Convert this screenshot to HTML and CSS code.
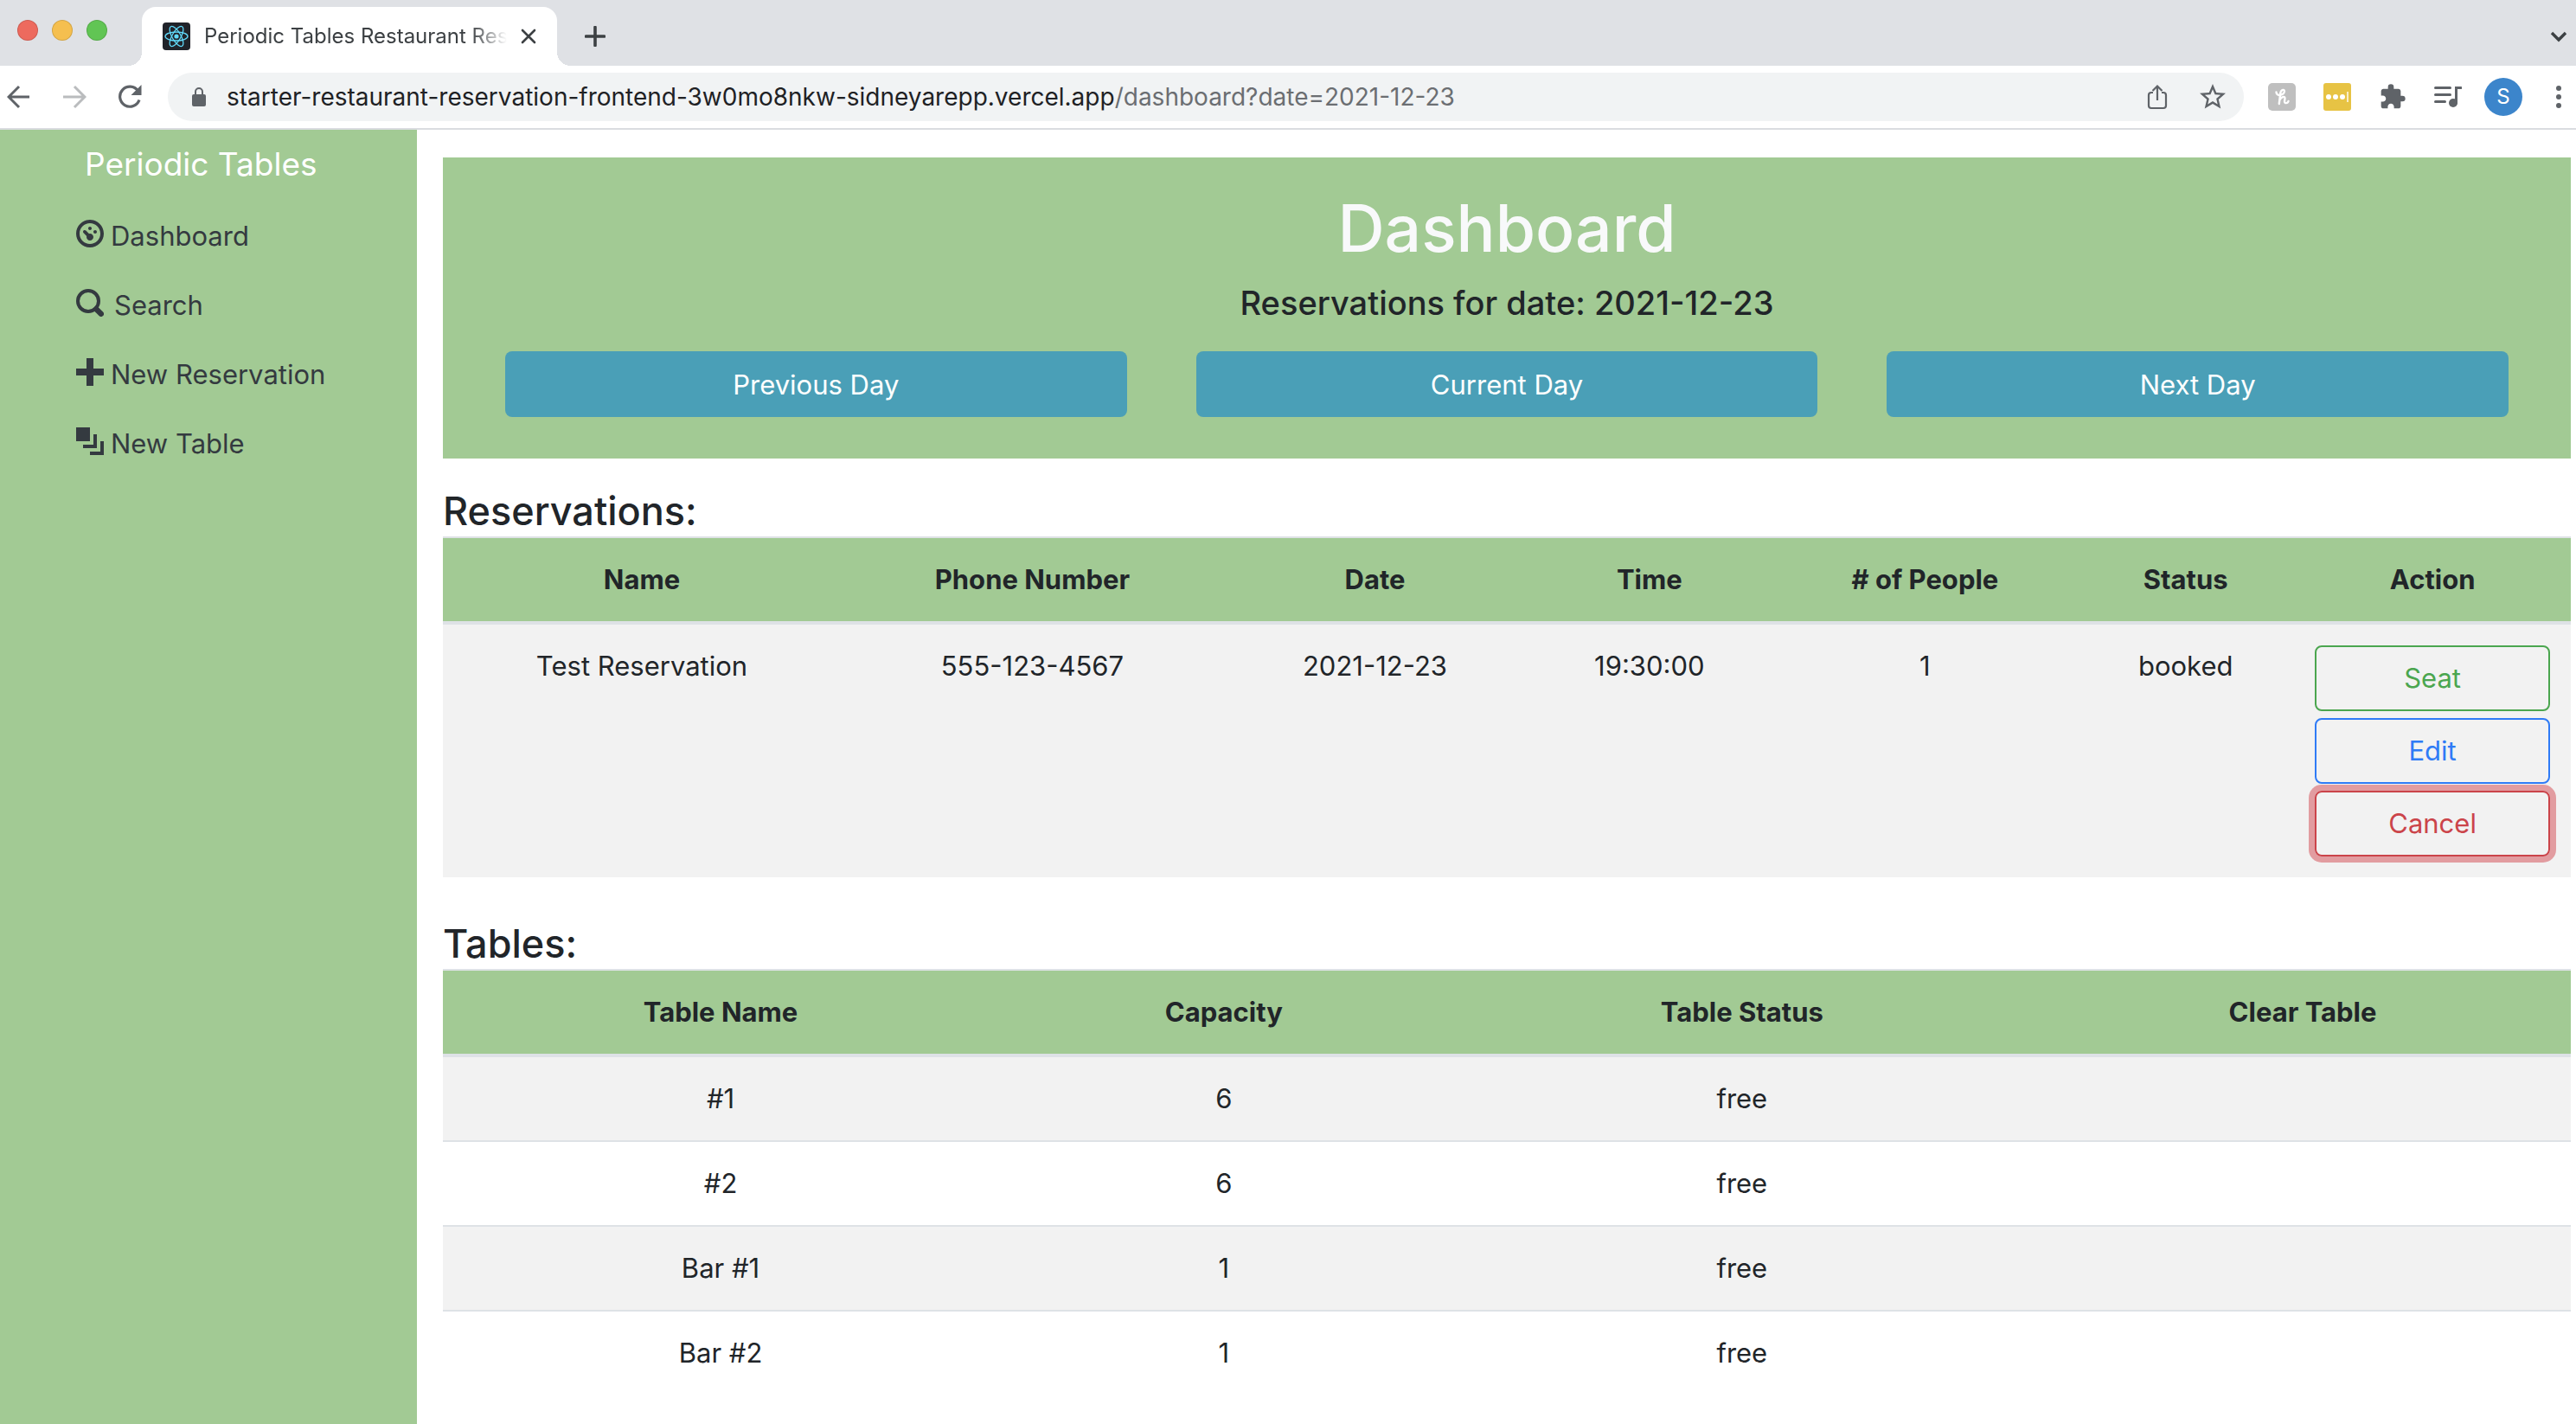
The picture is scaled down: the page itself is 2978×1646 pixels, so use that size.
FILE: index.html
```html
<!DOCTYPE html>
<html lang="en">
<head>
<meta charset="utf-8">
<title>Periodic Tables Restaurant Reservation</title>
<link rel="stylesheet" href="styles.css">
</head>
<body>
<header class="browser">
  <div class="tab-strip">
    <div class="lights"><span class="light red"></span><span class="light yellow"></span><span class="light green"></span></div>
    <div class="tab">
      <svg class="favicon" viewBox="0 0 32 32" aria-hidden="true"><rect width="32" height="32" rx="4" fill="#20232a"/><g fill="none" stroke="#61dafb" stroke-width="1.3"><ellipse cx="16" cy="16" rx="13" ry="5"/><ellipse cx="16" cy="16" rx="13" ry="5" transform="rotate(60 16 16)"/><ellipse cx="16" cy="16" rx="13" ry="5" transform="rotate(120 16 16)"/></g><circle cx="16" cy="16" r="2.6" fill="#61dafb"/></svg>
      <span class="tab-title">Periodic Tables Restaurant Reservation</span>
      <button class="icon-button" aria-label="Close tab"><svg width="18" height="18" viewBox="0 0 18 18"><path d="M2 2l14 14M16 2L2 16" stroke="#3c4043" stroke-width="2.6" stroke-linecap="round"/></svg></button>
    </div>
    <button class="icon-button new-tab" aria-label="New tab"><svg width="24" height="24" viewBox="0 0 24 24"><path d="M12 1.500v21M1.500 12h21" stroke="#3c4043" stroke-width="3.600" stroke-linecap="round"/></svg></button>
    <button class="icon-button tab-search" aria-label="Search tabs"><svg width="20" height="14" viewBox="0 0 20 14"><path d="M2 3l8 8 8-8" fill="none" stroke="#3c4043" stroke-width="3.400"/></svg></button>
  </div>
  <div class="toolbar">
    <div class="nav-buttons">
      <button class="icon-button" aria-label="Back"><svg width="28" height="28" viewBox="0 0 28 28"><path d="M26 14H3M14 2L2 14l12 12" fill="none" stroke="#5f6368" stroke-width="3"/></svg></button>
      <button class="icon-button" aria-label="Forward"><svg width="28" height="28" viewBox="0 0 28 28"><path d="M1 14h24M14 2l12 12-12 12" fill="none" stroke="#babcbe" stroke-width="3"/></svg></button>
      <button class="icon-button" aria-label="Reload"><svg width="28" height="28" viewBox="0 0 28 28"><path d="M23.500 7A11.500 11.500 0 1 0 25 17.500" fill="none" stroke="#5f6368" stroke-width="3.200"/><path d="M27.500 0v12h-12z" fill="#5f6368"/></svg></button>
    </div>
    <div class="address">
      <svg width="18" height="24" viewBox="0 0 18 24" aria-hidden="true"><rect x="1" y="9" width="16" height="14" rx="2" fill="#5f6368"/><path d="M5 10V6a4 4 0 0 1 8 0v4" fill="none" stroke="#5f6368" stroke-width="2"/></svg>
      <span class="url">starter-restaurant-reservation-frontend-3w0mo8nkw-sidneyarepp.vercel.app<span class="path">/dashboard?date=2021-12-23</span></span>
      <button class="icon-button" aria-label="Share"><svg width="24" height="30" viewBox="0 0 24 30"><path d="M7 10H5a3 3 0 0 0-3 3v12a3 3 0 0 0 3 3h14a3 3 0 0 0 3-3V13a3 3 0 0 0-3-3h-2M12 19V3M6.500 8L12 2.500 17.500 8" fill="none" stroke="#5f6368" stroke-width="2.200"/></svg></button>
      <button class="icon-button star" aria-label="Bookmark"><svg width="36" height="36" viewBox="0 0 24 24"><path fill="#5f6368" d="M22 9.240l-7.190-.62L12 2 9.190 8.630 2 9.240l5.460 4.730L5.820 21 12 17.270 18.180 21l-1.630-7.030L22 9.240zM12 15.400l-3.760 2.270 1-4.280-3.320-2.880 4.380-.38L12 6.100l1.710 4.040 4.380.38-3.320 2.880 1 4.280L12 15.400z"/></svg></button>
    </div>
    <div class="account">
      <div class="extensions">
        <svg width="32" height="32" viewBox="0 0 32 32" aria-hidden="true"><rect width="32" height="32" rx="5" fill="#bfbfbf"/><path d="M9.500 10.500c0 3 3 3.800 5 3.300 3-.6 5.200-3 4.300-5s-4-.8-4.500 2.700L12.800 24M13.500 19.500c1.500-3.500 6-5 6-2 0 2-1.500 5 .5 5.500 1.500.3 3-.4 3.500-2" fill="none" stroke="#fff" stroke-width="2.400" stroke-linecap="round"/></svg>
        <svg width="32" height="32" viewBox="0 0 32 32" aria-hidden="true"><rect width="32" height="32" rx="3" fill="#e7c344"/><g fill="#fff"><circle cx="6" cy="16" r="3"/><circle cx="14" cy="16" r="3"/><circle cx="22" cy="16" r="3"/></g><path d="M28 10v12" stroke="#f8edc8" stroke-width="2"/></svg>
        <svg width="32" height="32" viewBox="0 0 24 24" aria-hidden="true"><path fill="#5f6368" d="M20.500 11H19V7c0-1.100-.9-2-2-2h-4V3.500a2.500 2.500 0 0 0-5 0V5H4c-1.100 0-1.990.9-1.990 2v3.800H3.500c1.490 0 2.700 1.210 2.700 2.700s-1.210 2.700-2.700 2.700H2V20c0 1.100.9 2 2 2h3.800v-1.500c0-1.490 1.210-2.700 2.700-2.700s2.700 1.210 2.700 2.700V22H17c1.100 0 2-.9 2-2v-4h1.500a2.500 2.500 0 0 0 0-5z"/></svg>
        <svg width="32" height="26" viewBox="0 0 32 26" aria-hidden="true"><path d="M1.500 2.500h17M1.500 10.500h17M1.500 18.500h11" stroke="#5f6368" stroke-width="3" stroke-linecap="round"/><circle cx="22" cy="20" r="5" fill="#5f6368"/><path d="M25.500 20V2.500H31" fill="none" stroke="#5f6368" stroke-width="3" stroke-linecap="round"/></svg>
      </div>
      <span class="avatar">S</span>
      <button class="icon-button" aria-label="Menu"><svg width="32" height="28" viewBox="0 0 32 28"><g fill="#5f6368"><circle cx="16" cy="4" r="3"/><circle cx="16" cy="14" r="3"/><circle cx="16" cy="24" r="3"/></g></svg></button>
    </div>
  </div>
</header>
<div class="app">
  <nav class="sidebar">
    <a class="brand" href="#">Periodic Tables</a>
    <ul class="menu">
      <li><a href="#"><svg viewBox="0 0 8 8" aria-hidden="true"><path d="M4 0c-2.200 0-4 1.800-4 4s1.800 4 4 4 4-1.800 4-4-1.800-4-4-4zm0 1c1.660 0 3 1.340 3 3s-1.340 3-3 3-3-1.340-3-3 1.340-3 3-3zm0 1c-.28 0-.5.22-.5.500s.22.500.500.500.500-.22.500-.500-.22-.500-.500-.500zm-1.660 1a.500.500 0 0 0-.190.840l.910.910c-.02.080-.060.160-.060.250 0 .550.450 1 1 1s1-.450 1-1-.450-1-1-1c-.090 0-.170.040-.250.060l-.910-.910a.500.500 0 0 0-.440-.160.500.500 0 0 0-.060 0zm3.160 0c-.28 0-.5.220-.5.500s.22.500.500.500.500-.22.500-.500-.22-.500-.500-.500z"/></svg><span>Dashboard</span></a></li>
      <li><a class="search" href="#"><svg viewBox="0 0 8 8" aria-hidden="true"><circle cx="3.500" cy="3.500" r="3" fill="none" stroke="currentColor"/><path d="M5.800 5.800L7.200 7.200" stroke="currentColor" stroke-width="1.600" stroke-linecap="round"/></svg><span>Search</span></a></li>
      <li><a href="#"><svg viewBox="0 0 8 8" aria-hidden="true"><path d="M3 0v3h-3v2h3v3h2v-3h3v-2h-3v-3h-2z"/></svg><span>New Reservation</span></a></li>
      <li><a href="#"><svg viewBox="0 0 8 8" aria-hidden="true"><path d="M0 0v4h4v-4h-4zm5 2v3h-3v1h4v-4h-1zm2 2v3h-3v1h4v-4h-1z"/></svg><span>New Table</span></a></li>
    </ul>
  </nav>
  <main class="content">
    <section class="hero">
      <h1>Dashboard</h1>
      <h4>Reservations for date: 2021-12-23</h4>
      <div class="days">
        <button class="day">Previous Day</button>
        <button class="day">Current Day</button>
        <button class="day">Next Day</button>
      </div>
    </section>
    <h3>Reservations:</h3>
    <table class="table reservations">
      <colgroup><col class="c1"><col class="c2"><col class="c3"><col class="c4"><col class="c5"><col class="c6"><col class="c7"></colgroup>
      <thead><tr><th>Name</th><th>Phone Number</th><th>Date</th><th>Time</th><th># of People</th><th>Status</th><th>Action</th></tr></thead>
      <tbody><tr><td>Test Reservation</td><td>555-123-4567</td><td>2021-12-23</td><td>19:30:00</td><td>1</td><td>booked</td>
        <td><div class="actions"><button class="action seat">Seat</button><button class="action edit">Edit</button><button class="action cancel">Cancel</button></div></td></tr></tbody>
    </table>
    <h3>Tables:</h3>
    <table class="table seating">
      <colgroup><col class="t1"><col class="t2"><col class="t3"><col class="t4"></colgroup>
      <thead><tr><th>Table Name</th><th>Capacity</th><th>Table Status</th><th>Clear Table</th></tr></thead>
      <tbody>
        <tr><td>#1</td><td>6</td><td>free</td><td></td></tr>
        <tr><td>#2</td><td>6</td><td>free</td><td></td></tr>
        <tr><td>Bar #1</td><td>1</td><td>free</td><td></td></tr>
        <tr><td>Bar #2</td><td>1</td><td>free</td><td></td></tr>
      </tbody>
    </table>
  </main>
</div>
</body>
</html>
```
FILE: styles.css
```css
* { box-sizing: border-box; }
body {
  margin: 0;
  min-height: 100vh;
  display: flex;
  flex-direction: column;
  font-family: Inter, "Liberation Sans", sans-serif;
  font-size: 31px;
  line-height: 48px;
  color: #212529;
  background: #fff;
}
button { font: inherit; cursor: pointer; }
a { color: inherit; text-decoration: none; }
svg { display: block; flex: none; }

/* Browser window */
.icon-button { display: flex; padding: 0; border: 0; background: none; }
.tab-strip { display: flex; align-items: flex-end; height: 76px; padding: 0 10px 0 20px; background: #dfe1e5; }
.lights { display: flex; gap: 16px; width: 144px; padding-bottom: 29px; }
.light { width: 24px; height: 24px; border-radius: 50%; border: 1px solid #0002; }
.red { background: #ed6a5e; }
.yellow { background: #f5bf4f; }
.green { background: #61c554; }
.tab {
  position: relative;
  display: flex;
  align-items: center;
  gap: 16px;
  width: 480px;
  height: 68px;
  padding: 0 24px;
  border-radius: 16px 16px 0 0;
  background: #fff;
}
.tab::before, .tab::after { content: ""; position: absolute; bottom: 0; width: 16px; height: 16px; }
.tab::before { right: 100%; background: radial-gradient(circle at 0 0, transparent 16px, #fff 16px); }
.tab::after { left: 100%; background: radial-gradient(circle at 100% 0, transparent 16px, #fff 16px); }
.favicon { width: 32px; height: 32px; }
.tab-title {
  flex: 1;
  overflow: hidden;
  white-space: nowrap;
  font-size: 24px;
  color: #3c4043;
  mask-image: linear-gradient(to right, #000 88%, transparent);
}
.new-tab { margin: 0 0 22px 32px; }
.tab-search { margin: 0 0 27px auto; }
.toolbar { display: flex; align-items: center; height: 74px; padding: 0 4px 0 8px; border-bottom: 2px solid #dadce0; background: #fff; }
.nav-buttons { display: flex; gap: 36px; width: 186px; }
.address { display: flex; align-items: center; flex: 1; height: 56px; padding: 0 18px 0 27px; border-radius: 28px; background: #f1f3f4; }
.url { flex: 1; padding-left: 23px; font-size: 28px; color: #202124; white-space: nowrap; }
.path { color: #6b6e72; }
.star { margin-left: 34px; }
.account { display: flex; align-items: center; gap: 26px; padding-left: 28px; }
.extensions { display: flex; align-items: center; gap: 32px; }
.avatar { width: 44px; border-radius: 50%; background: #3c85cb; color: #fff; font-size: 24px; line-height: 44px; text-align: center; }

/* Page */
.app { display: flex; flex: 1; }
.sidebar { width: 482px; padding: 10px 0 0 88px; background: #a2ca94; }
.brand { display: block; padding-left: 10px; font-size: 37px; line-height: 60px; color: #fff; }
.menu { margin: 12px 0 0; padding: 0; list-style: none; color: #343a40; }
.menu a { display: flex; gap: 8px; padding: 16px 0 15px; }
.menu a.search { gap: 12px; }
.menu svg { width: 32px; height: 32px; margin-top: 6px; fill: currentColor; }
.menu span { padding-top: 1px; }
.content { flex: 1; padding: 32px 6px 0 30px; }
.hero { padding: 34px 72px 48px; background: #a2ca94; text-align: center; }
h1, h3, h4 { margin: 0; font-weight: 500; }
h1 { font-size: 75px; line-height: 96px; color: #f8f9fa; }
h4 { margin: 10px 0 28px; font-size: 38px; line-height: 56px; }
.days { display: grid; grid-template-columns: repeat(3, 1fr); gap: 80px; }
.day { height: 76px; padding-top: 2px; border: 0; border-radius: 8px; background: #4a9fb7; color: #fff; }
h3 { margin-top: 32px; font-size: 45px; line-height: 58px; }
.table { width: 100%; margin-bottom: 48px; border-collapse: collapse; table-layout: fixed; text-align: center; }
.table th, .table td { padding: 24px; border-top: 2px solid #dee2e6; vertical-align: top; }
.table th { border-bottom: 4px solid #dee2e6; background: #a2ca94; font-weight: 700; }
.table tbody tr:nth-child(odd) { background: #f2f2f2; }
.c1 { width: 18.7%; }
.c2 { width: 18%; }
.c3 { width: 14.2%; }
.c4 { width: 11.6%; }
.c5 { width: 14.3%; }
.c6 { width: 10.2%; }
.c7 { width: 13%; }
.t1 { width: 26.1%; }
.t2 { width: 21.2%; }
.t3 { width: 27.5%; }
.t4 { width: 25.2%; }
.actions { display: grid; gap: 8px; }
.action { height: 76px; border: 2px solid; border-radius: 8px; background: none; }
.seat { color: #4ba64f; }
.edit { color: #2f7bf6; }
.cancel { color: #cb444a; box-shadow: 0 0 0 7px #e29ca0; }
```
